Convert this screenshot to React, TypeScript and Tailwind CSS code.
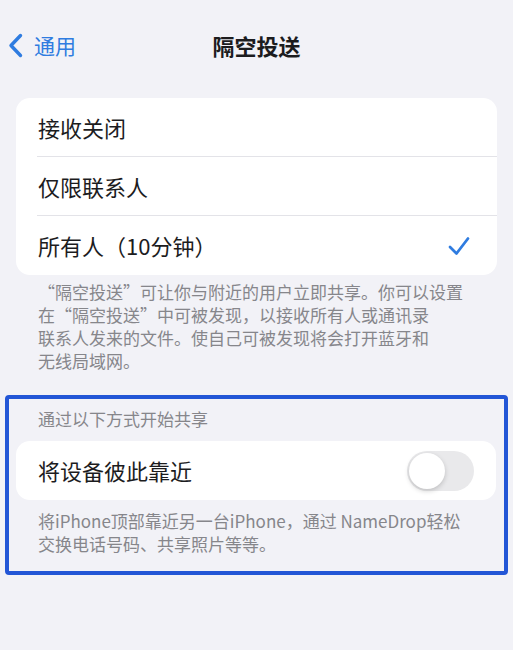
const font = { fontFamily: '"Noto Sans CJK SC", "Noto Sans", sans-serif' }

function Row({ label, last, children }: { label: string; last?: boolean; children?: React.ReactNode }) {
  return (
    <div className="pl-[21px]">
      <div className={"h-[59px] flex items-center justify-between pr-[22px] " + (last ? "" : "border-b border-[#e3e3e8]")}>
        <span className="pl-[1px] text-[22px] text-[#1c1c1e]">{label}</span>
        {children}
      </div>
    </div>
  )
}

export default function App() {
  return (
    <div className="w-[513px] h-[650px] bg-[#f2f2f7] overflow-hidden" style={font}>
      {/* nav bar */}
      <div className="relative h-[90px] flex items-center">
        <div className="flex items-center pl-[8px] text-[#2f7ce0]">
          <svg width="15" height="25" viewBox="0 0 15 25" fill="none">
            <path d="M12.5 2.5 L3 12.5 L12.5 22.5" stroke="#2f7ce0" strokeWidth="3.4" strokeLinecap="round" strokeLinejoin="round" />
          </svg>
          <span className="ml-[11px] text-[21px] leading-none">通用</span>
        </div>
        <div className="absolute inset-x-0 top-0 h-[90px] flex items-center justify-center pointer-events-none">
          <span className="text-[22px] font-semibold text-[#1c1c1e] leading-none">隔空投送</span>
        </div>
      </div>

      {/* receive options */}
      <div className="mt-[8px] mx-[16px] bg-white rounded-[14px] overflow-hidden">
        <Row label="接收关闭" />
        <Row label="仅限联系人" />
        <Row label="所有人（10分钟）" last>
          <svg width="22" height="20" viewBox="0 0 22 20" fill="none" className="mr-[5px]">
            <path d="M2 11 L8.5 17.5 L20 2.5" stroke="#2f7ce0" strokeWidth="2.8" strokeLinecap="round" strokeLinejoin="round" />
          </svg>
        </Row>
      </div>
      <p className="pl-[38px] pt-[5px] text-[17px] leading-[23px] text-[#86868b]">
        “隔空投送”可让你与附近的用户立即共享。你可以设置<br />
        在“隔空投送”中可被发现，以接收所有人或通讯录<br />
        联系人发来的文件。使自己可被发现将会打开蓝牙和<br />
        无线局域网。
      </p>

      {/* highlighted section */}
      <div className="mt-[23px] mx-[5px] border-[4px] border-[#2356d6] rounded-[4px] h-[180px]">
        <div className="pl-[29px] pt-[9px] text-[17px] leading-[21px] text-[#86868b]">通过以下方式开始共享</div>
        <div className="mt-[12px] ml-[7px] mr-[8px] bg-white rounded-[14px] h-[59px] flex items-center justify-between pl-[22px] pr-[22px]">
          <span className="text-[22px] text-[#1c1c1e]">将设备彼此靠近</span>
          <div className="w-[67px] h-[40px] rounded-full bg-[#e9e9eb] p-[2px]">
            <div className="w-[36px] h-[36px] rounded-full bg-white shadow-[0_2px_5px_rgba(0,0,0,0.18)]" />
          </div>
        </div>
        <p className="pl-[29px] pt-[9px] text-[17px] leading-[23px] text-[#86868b]">
          将iPhone顶部靠近另一台iPhone，通过 NameDrop轻松<br />
          交换电话号码、共享照片等等。
        </p>
      </div>
    </div>
  )
}
